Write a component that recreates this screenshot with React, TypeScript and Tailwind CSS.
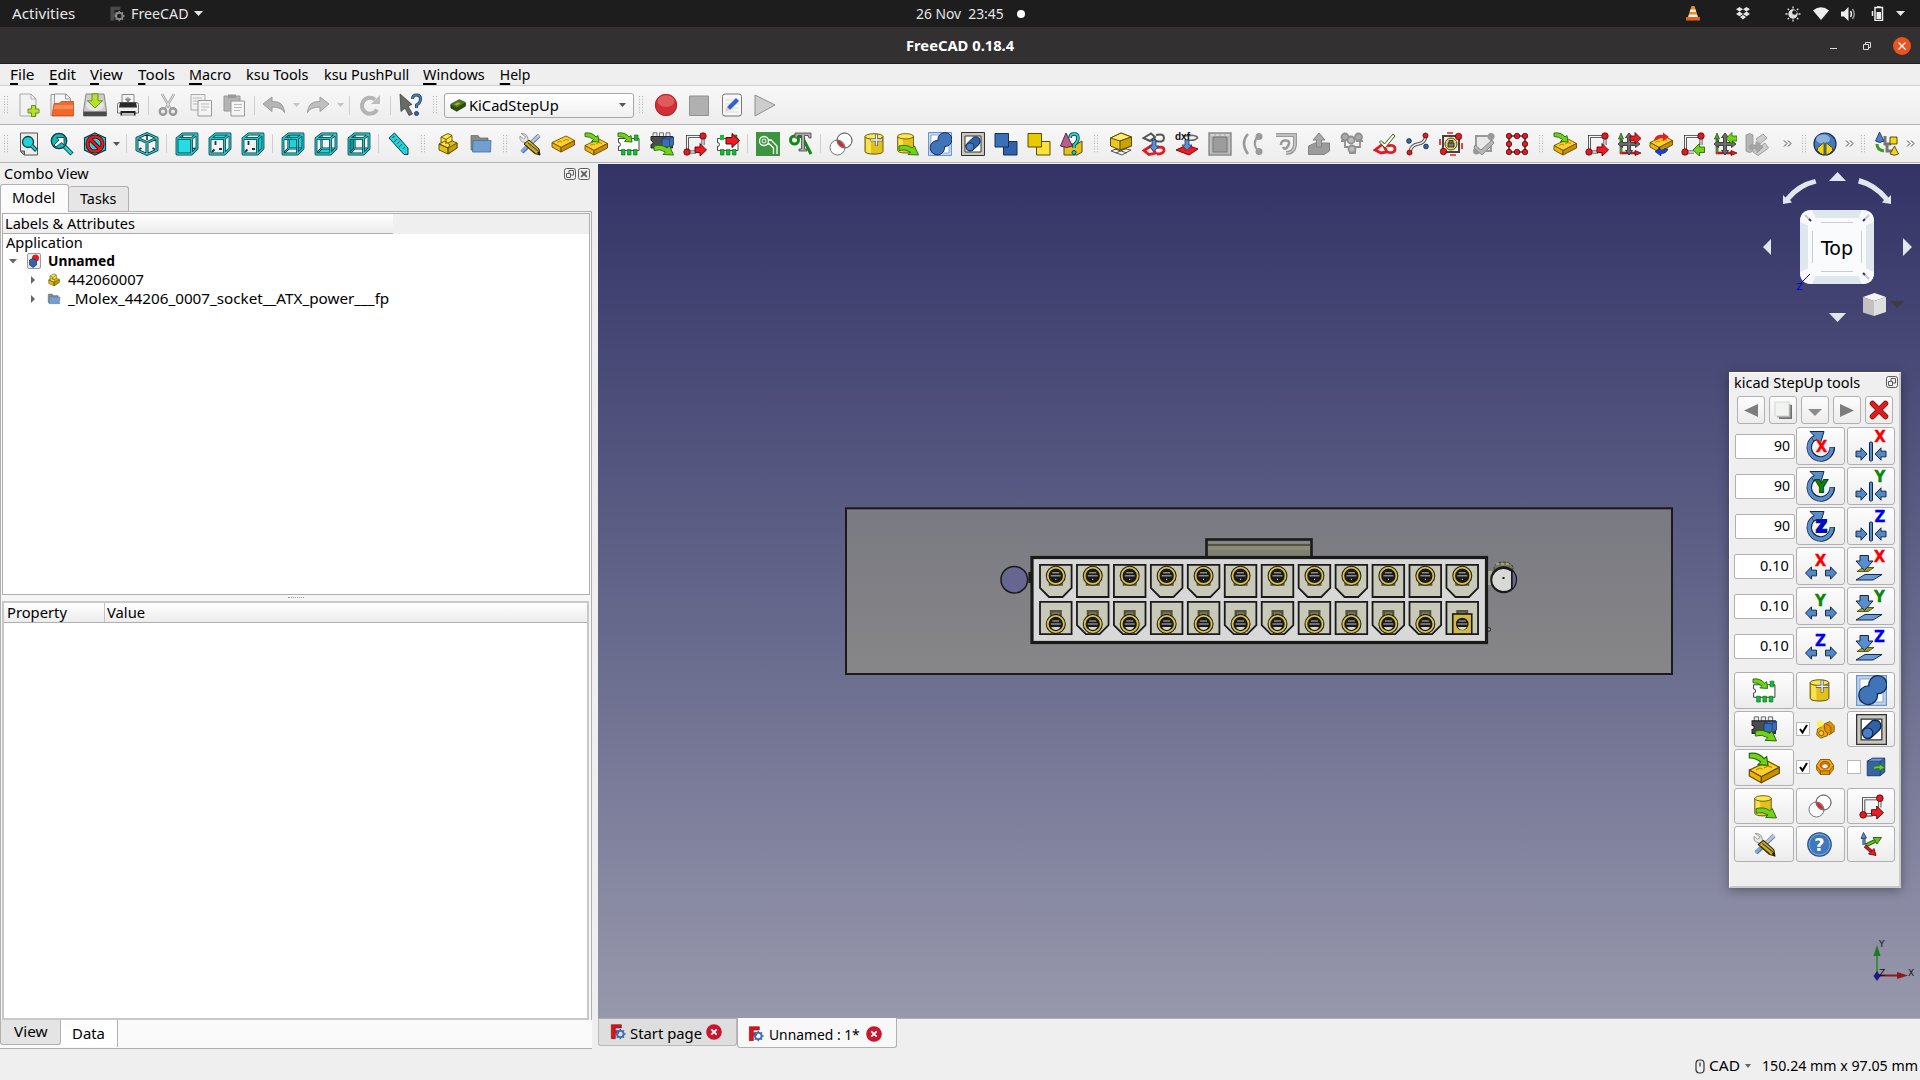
import React, { useLayoutEffect, useRef, useState } from "react";

type Kids = { children?: React.ReactNode };

/* Text condensed or widened horizontally so that it fills exactly w pixels. */
function Fit({ w, t, u = false, className = "" }: { w: number; t: string; u?: boolean; className?: string }) {
  const ref = useRef<HTMLSpanElement>(null);
  const [s, setS] = useState(1);
  useLayoutEffect(() => {
    if (ref.current && ref.current.offsetWidth) setS(w / ref.current.offsetWidth);
  }, [w, t]);
  return (
    <span className={"inline-block shrink-0 whitespace-pre " + className} style={{ width: w }}>
      <span ref={ref} className="inline-block origin-left" style={{ transform: `scaleX(${s})` }}>
        {u ? <><span className="underline decoration-2 underline-offset-[3px]">{t[0]}</span>{t.slice(1)}</> : t}
      </span>
    </span>
  );
}

const Svg = ({ children, s = 24 }: Kids & { s?: number }) => (
  <svg width={s} height={s} viewBox="0 0 24 24" className="block shrink-0" fill="none">{children}</svg>
);

const TEAL = "#0b3c40";
const CY = "#1fd3da";

type Face = "front" | "top" | "right" | "rear" | "bottom" | "left";

function Cube({ face }: { face: Face }) {
  const near = "M2 6.500H16.500V22H2ZM2 6.500L7.500 2H22V16.500L16.500 22M16.500 6.500L22 2";
  const far = "M7.500 2V16.500L2 22M7.500 16.500H22";
  const ticks = "M7.500 9V13M6.500 17.500L4 20M11 17H14";
  const faces: Record<Face, string> = {
    front: "M2 6.500H16.500V22H2Z",
    top: "M2 6.500L7.500 2H22L16.500 6.500Z",
    right: "M16.500 6.500L22 2V16.500L16.500 22Z",
    rear: "M7.500 2H22V16.500H7.500Z",
    bottom: "M2 22L7.500 16.500H22L16.500 22Z",
    left: "M2 6.500L7.500 2V16.500L2 22Z",
  };
  const solid = face === "front" || face === "top" || face === "right";
  return (
    <Svg>
      {!solid && <path d={faces[face]} fill={face === "left" ? "#12939a" : CY} />}
      {solid
        ? face !== "front" && <path d={ticks} stroke={TEAL} strokeWidth="1.800" />
        : <><path d={far} stroke={TEAL} strokeWidth="2.200" /><path d={far} stroke="#1eb9c0" strokeWidth=".9" /></>}
      {face === "front" && <path d="M7.500 2V6M17 16.500H22" stroke={TEAL} strokeWidth="1.400" />}
      {solid && <path d={faces[face]} fill={face === "right" ? "#19c4cb" : "#27dde4"} />}
      <path d={near} stroke={TEAL} strokeWidth="2.800" strokeLinejoin="round" />
      <path d={near} stroke="#22c5cc" strokeWidth="1.300" strokeLinejoin="round" />
    </Svg>
  );
}

const Board = ({ dy = 0 }: { dy?: number }) => (
  <g transform={`translate(0 ${dy})`} stroke="#6b4a00" strokeWidth=".9" strokeLinejoin="round">
    <path d="M1 10.500L15 4L23.500 8.500L10 15.500Z" fill="#fbd12a" />
    <path d="M1 10.500L10 15.500V20L1 15Z" fill="#f0b400" />
    <path d="M10 15.500L23.500 8.500V13L10 20Z" fill="#c98f00" />
    <path d="M6 10.500l3-1.500 2 1M12 9l3-1.500 3 1" fill="none" stroke="#b98500" />
  </g>
);
const GreenIn = () => <path d="M1 1Q8 0 12 5L14 3.500L15 10L7.500 9.500L9.500 7.500Q6 4.500 1 4.500Z" fill="#73d216" stroke="#1f6b07" strokeWidth=".9" />;
const GreenOut = () => <path d="M4 14Q12 12 17 16L19.500 14L23.500 23L13 22.500L15.500 20Q10 16.500 4 18.500Z" fill="#73d216" stroke="#1f6b07" strokeWidth=".9" />;
const RedDot = ({ x, y, r = 3.2 }: { x: number; y: number; r?: number }) => <circle cx={x} cy={y} r={r} fill="#e01b24" stroke="#5c0004" strokeWidth=".8" />;
const Pads = () => (
  <>
    <path d="M1.500 6.500H22V18.500H1.500V14.500A2 2 0 0 0 1.500 10.500Z" fill="#fff" stroke="#333" strokeWidth=".9" />
    <g fill="#0ac52c" stroke="#0a5a18" strokeWidth=".6"><path d="M4.500 17.500h3.500v5.500H4.500zM10.500 17.500h3.500v5.500h-3.500zM16.500 17.500h3.500v5.500h-3.500zM17.500 3h3.500v5.500h-3.500z" /></g>
  </>
);
const Cyl = () => (
  <>
    <path d="M3 4.500V19.500C3 23 21 23 21 19.500V4.500Z" fill="#e3c11c" stroke="#5b4a00" strokeWidth=".9" />
    <path d="M4 6v13.500c1 1 3 1.500 5 1.800V7.500z" fill="#f7e253" />
    <ellipse cx="12" cy="4.500" rx="9" ry="2.800" fill="#fbe84e" stroke="#5b4a00" strokeWidth=".9" />
  </>
);
const SketchBox = () => (
  <>
    <path d="M4.500 20.500V4.500H20M20 5V13M4 20H13" stroke="#333" strokeWidth="3" />
    <path d="M4.500 20.500V4.500H20M20 5V14M4.500 20H13" stroke="#f4f4f4" strokeWidth="1.400" />
    <RedDot x={20} y={4} /><RedDot x={4} y={20} />
  </>
);
const Cross = () => (
  <>
    <path d="M4 22V4M3 21H21" stroke="#3a2a2a" strokeWidth="2.600" />
    <path d="M4 22V4" stroke="#4caf2a" strokeWidth="1.500" /><path d="M3 21H21" stroke="#e01b24" strokeWidth="1.500" />
    <path d="M1.500 7L4 1L6.500 7Z" fill="#4caf2a" stroke="#1d4a10" strokeWidth=".7" /><path d="M18 18.500L24 21L18 23.500Z" fill="#e01b24" stroke="#500" strokeWidth=".7" />
    <path d="M12 1l3.500 4.500h-2v5h5v-2L23 12l-4.500 3.500v-2h-5v5h2L12 23l-3.500-4.500h2v-5h-5v2L1 12l4.500-3.500v2h5v-5h-2z" fill="#6b6b6b" stroke="#222" strokeWidth=".8" />
  </>
);

const ISO = "M12 1.500L22 6V18L12 22.500L2 18V6ZM2 6L12 10.500L22 6M12 10.500V22.500";

const I: Record<string, React.ReactNode> = {
  newdoc: <><path d="M3 1H14L19 6V23H3Z" fill="#f2f2f2" stroke="#aaa" /><path d="M14 1V6H19Z" fill="#fff" stroke="#999" strokeWidth=".8" /><path d="M14.500 12.500h4v3.500h3.500v4h-3.500V23.500h-4v-3.500H11v-4h3.500z" fill="#b7e02d" stroke="#5e8c06" strokeWidth=".9" /></>,
  open: <><path d="M1 23V1.500H4.500V23" fill="#eee" stroke="#999" /><path d="M4.500 20V1H16L20.500 5.500V20Z" fill="#f7f7f7" stroke="#999" /><path d="M15.500 1V6H20.500" stroke="#999" /><path d="M2 23L4 10.500H9L11 8.500H23.500V23Z" fill="#f0682a" stroke="#c64a1a" strokeWidth=".8" /><path d="M4.500 12H23V16H3.800z" fill="#f99a68" opacity=".7" /></>,
  save: <><path d="M3 1H21L23.500 18V23H.5V18Z" fill="#ccc" stroke="#888" /><path d="M.5 18.500H23.500V23H.5Z" fill="#4a4a4a" /><ellipse cx="12" cy="12" rx="9" ry="6" fill="#e6e6e6" /><path d="M9 .8h6v7h4.500L12 15L4.500 7.800H9z" fill="#b6df2f" stroke="#5f8d08" strokeWidth=".9" /></>,
  print: <><path d="M6 11V1.500H18V11" fill="#f4f4f4" stroke="#888" /><path d="M12 4v4m-2.500-2L12 9l2.500-3z" stroke="#888" fill="#888" /><path d="M1.500 11.500Q1.500 9.500 4 9.500H20Q22.500 9.500 22.500 11.500V20H1.500Z" fill="#f0f0f0" stroke="#777" /><path d="M4 9.500H20L21 14.500H3Z" fill="#2a2a2a" /><path d="M4.500 18H19.500V22.500H4.500Z" fill="#222" /><path d="M6 20H18V23H6Z" fill="#bbb" /></>,
  cut: <><path d="M6 1L14 15M18 1L10 15" stroke="#999" strokeWidth="2.500" /><path d="M6 1L14 15M18 1L10 15" stroke="#e8e8e8" strokeWidth="1" /><circle cx="7" cy="18.500" r="3.200" stroke="#9a9a9a" strokeWidth="2.500" /><circle cx="17" cy="18.500" r="3.200" stroke="#9a9a9a" strokeWidth="2.500" /></>,
  copy: <><path d="M2 1.500H16V17H2Z" fill="#f1f1f1" stroke="#aaa" /><path d="M4 5h9M4 8h9M4 11h9" stroke="#bbb" /><path d="M9 7.500H22.500V23H9Z" fill="#f4f4f4" stroke="#999" /><path d="M12 11h8M12 14h8M12 17h6" stroke="#bbb" /></>,
  paste: <><path d="M2 3H18V18H2Z" fill="#b3b3b3" stroke="#999" /><path d="M6 1.500H14V5H6Z" fill="#999" /><path d="M9 8H22.500V23H9Z" fill="#f4f4f4" stroke="#999" /><path d="M12 11.500h8M12 14.500h8M12 17.500h6" stroke="#bbb" /></>,
  undo: <path d="M1 11L10 4V8.500Q22 8 22.500 19.500Q20 14 10 14V18.500Z" fill="#b5b5b5" stroke="#9c9c9c" strokeLinejoin="round" />,
  redo: <path d="M23 11L14 4V8.500Q2 8 1.500 19.500Q4 14 14 14V18.500Z" fill="#c0c0c0" stroke="#9c9c9c" strokeLinejoin="round" />,
  refresh: <><path d="M19 16.500A8 8 0 1 1 17 6.500" stroke="#b4b4b4" strokeWidth="4" /><path d="M22 2V11H13Z" fill="#bdbdbd" /></>,
  whats: <><path d="M2 1L14 11.500L10 13L14.500 21L11 22.500L7 15L3 18.500Z" fill="#666b68" stroke="#3e423f" strokeWidth=".8" /><path d="M14.500 6Q14.500 2 18.500 2T22.500 6T18.500 12V15" stroke="#20406e" strokeWidth="3" /><path d="M14.500 6Q14.500 2 18.500 2T22.500 6T18.500 12V15" stroke="#4a7fc0" strokeWidth="1.400" /><circle cx="18.500" cy="20.500" r="2" fill="#3465a4" stroke="#20406e" /></>,
  record: <><circle cx="12" cy="12" r="11" fill="#d22f36" /><ellipse cx="12" cy="8" rx="8.500" ry="6" fill="#e8736f" opacity=".65" /><circle cx="12" cy="12" r="10.600" stroke="#a81c24" strokeWidth=".8" /></>,
  stop: <path d="M2.500 3H21.500V22.500H2.500Z" fill="#b0b0b0" stroke="#919191" />,
  edit: <><rect x="2.500" y="1" width="19" height="22" rx="2.500" fill="#f7f7f7" stroke="#777" /><path d="M5 7h14M5 11h14M5 15h14M5 19h14" stroke="#ddd" /><path d="M16 5L19 8L10 17L7 14Z" fill="#2f62d9" /><path d="M7 14L10 17L5.500 18.500Z" fill="#eec79a" /></>,
  play: <path d="M2 2L22 12L2 23Z" fill="#cdcdcd" stroke="#909090" />,
  fitall: <><path d="M3.500 1H20.500V23H7L3.500 19.500Z" fill="#ececea" stroke="#555" /><path d="M3.500 19h4v4" fill="#999" stroke="#555" /><circle cx="11" cy="10" r="5.500" fill={CY} stroke={TEAL} strokeWidth="1.300" /><path d="M14.500 13.500L19.500 18.500" stroke={TEAL} strokeWidth="4" /><path d="M14.500 13.500L19 18" stroke={CY} strokeWidth="2" /></>,
  fitsel: <><path d="M14 14L22 22" stroke={TEAL} strokeWidth="4.500" /><path d="M14 14L21.500 21.500" stroke={CY} strokeWidth="2.600" /><circle cx="9" cy="9" r="7.700" fill="#19b5bd" stroke={TEAL} strokeWidth="1.300" /><path d="M4 13l5-5-2.500-2.500H14V13L11.500 10.500L6 15z" fill="#fff" stroke={TEAL} strokeWidth=".9" /></>,
  nodraw: <><path d="M12 1L22.500 6V18L12 23L1.500 18V6Z" fill={CY} stroke={TEAL} strokeWidth="1.200" /><circle cx="12" cy="12" r="7.500" stroke="#4d0003" strokeWidth="4" /><path d="M6.500 6.500L17.500 17.500" stroke="#4d0003" strokeWidth="4" /><circle cx="12" cy="12" r="7.500" stroke="#e01b24" strokeWidth="2.400" /><path d="M6.500 6.500L17.500 17.500" stroke="#e01b24" strokeWidth="2.400" /></>,
  iso: <><path d="M12 4V8M6.500 16L4 17.500M17.500 16L20 17.500" stroke={TEAL} strokeWidth="1.600" /><path d={ISO} stroke={TEAL} strokeWidth="3" strokeLinejoin="round" /><path d={ISO} stroke="#35ccd2" strokeWidth="1.300" strokeLinejoin="round" /></>,
  ruler: <><path d="M2 6L7.500 1L21 16V22.500H17Z" fill={CY} stroke={TEAL} /><path d="M7.500 4l-2 2M10 7l-3 3M12.500 9.500l-2 2M15 12l-3 3M18 15l-2 2" stroke={TEAL} /></>,
  part: <g stroke="#5b4a00" strokeWidth=".9" strokeLinejoin="round"><path d="M3 12L12 7L21 11V16L12 22L3 18Z" fill="#e3bf12" /><path d="M5 5L12 1.500L16 3.500V9L10 12L5 10Z" fill="#fce94f" /><path d="M3 12L9 9L14 13L12 16Z" fill="#fbe23e" /><path d="M12 16L21 11V16L12 22Z" fill="#c4a000" /><path d="M5 5l5 2.500L16 3.500M10 7.500V12M3 12l9 4v6" fill="none" /></g>,
  folder: <><path d="M2 3.500H9L11 6H19V18H2Z" fill="#888a85" stroke="#666" strokeWidth=".7" /><path d="M4 8.500H22L21.500 20H3.500Z" fill="#729fcf" stroke="#3f6ea5" strokeWidth=".8" /></>,
  tools: <><path d="M21 3.500L4 20" stroke="#3465a4" strokeWidth="4" /><path d="M21.500 3L13 11" stroke="#b9c5d6" strokeWidth="3" /><path d="M3.500 20L9 14.500" stroke="#7ea6d8" strokeWidth="3" /><path d="M3 1.500Q10 1 10 8L20 18L17 21L7 10.500Q1 10 2 4L5.500 7L8 5Z" fill="#e6e6e6" stroke="#8a8a8a" strokeWidth=".8" /><path d="M6 12L11 8L21 17L22 23L16.500 21.500Z" fill="#c9a92a" stroke="#2b2400" /><path d="M8 13.500L17 21M10 11L20 19" stroke="#413600" /><path d="M19 21l3 2-1-4z" fill="#111" /></>,
  board: <Board />,
  boardin: <><Board dy={3} /><GreenIn /></>,
  padsin: <><Pads /><GreenIn /></>,
  chipout: <><g fill="#eee" stroke="#555" strokeWidth=".8"><path d="M3 .8h4v4H3zM9.500.8h4v4h-4zM16 .8h4v4h-4z" /></g><path d="M1 4.500H22.500V16H1V12.500A2 2 0 0 0 1 8.500Z" fill="#4a4d50" stroke="#222" /><path d="M12 7L16 5H23.500V13L20 15H12Z" fill="#3a6fb8" stroke="#173a6c" strokeWidth=".8" /><path d="M12 7H19.500V15M19.500 7L23.500 5" stroke="#173a6c" strokeWidth=".7" /><GreenOut /></>,
  skred: <><SketchBox /><path d="M12 15h5v-3.500L23.500 18L17 24v-3.500H12z" fill="#ed1c24" stroke="#5c0004" strokeWidth=".9" /></>,
  skgreen: <><SketchBox /><path d="M23.500 15H18.500v-3.500L12 18L18.500 24v-3.500H23.500z" fill="#73d216" stroke="#1f6b07" strokeWidth=".9" /></>,
  padsout: <><Pads /><path d="M4 3h4v5H4z" fill="#0ac52c" /><path d="M10 5.500h6V1.500L23.500 8.500L16 15.500V12H10z" fill="#ed1c24" stroke="#5c0004" /></>,
  track: <><path d="M0 0H24V24H0Z" fill="#3c9440" /><circle cx="8" cy="9" r="4.500" stroke="#fff" strokeWidth="1.300" /><circle cx="8" cy="9" r="2" stroke="#fff" /><path d="M12 8H15L21 14V22M11 12H13.500L17.500 16V22" stroke="#fff" strokeWidth="1.300" /></>,
  tracktext: <><circle cx="5.500" cy="8" r="4" stroke="#0d8a14" strokeWidth="3" /><path d="M9 4.500H13L22 22" stroke="#0d8a14" strokeWidth="3" /><path d="M6 1H22V6H20L19 3.500H15.500V17H18V19H10V17H12.500V3.500H9L8 6H6Z" fill="#aaa" stroke="#444" strokeWidth=".8" /></>,
  inter: <><circle cx="15.500" cy="8.500" r="7.500" fill="#fff" stroke="#777" /><circle cx="8.500" cy="15.500" r="7.500" fill="#fff" stroke="#777" /><path d="M8 8.200Q14 8.500 15.800 15.800Q9 15 8 8.200Z" fill="#ed1c24" stroke="#777" /><circle cx="15.500" cy="8.500" r="7.500" stroke="#666" strokeWidth=".8" /></>,
  cylplus: <><Cyl /><path d="M14.500 2v12M8.500 8h12" stroke="#666" strokeWidth="3" /><path d="M14.500 2.500v11M9 8h11" stroke="#f4f4f4" strokeWidth="1.300" /></>,
  cylout: <><g transform="scale(.88 .95)"><Cyl /></g><GreenOut /></>,
  union: <><path d="M.5.500H23.500V23.500H.5Z" fill="#c3d6ee" stroke="#6c96c9" /><path d="M3 3H21V21H3Z" fill="#fff" stroke="#89add8" /><path d="M10 8.500A7 7 0 1 1 16.500 14.500A7.200 7.200 0 1 1 10 8.500Z" fill="#3f75b8" stroke="#122f58" /></>,
  boxed: <><path d="M.5.500H23.500V23.500H.5Z" fill="#c9c9c2" stroke="#333" /><path d="M4 4H20V20H4Z" fill="#fff" stroke="#333" /><path d="M5.500 12L12.500 5.200Q17 4 18.700 7Q20 10 18 12.500L11.500 18.500Q7 20 5.500 16.500T5.500 12Z" fill="#2f62a8" stroke="#0d274c" /><circle cx="9" cy="14.800" r="4" fill="#4b80c4" stroke="#0d274c" strokeWidth=".8" /></>,
  bluesq: <g fill="#2f62a8" stroke="#122f58"><path d="M9.500 9.500H23V23H9.500Z" /><path d="M1 1.500H14.500V15H1Z" fill="#3a70b5" /></g>,
  yelsq: <g fill="#fbe23e" stroke="#5b4a00"><path d="M9.500 9.500H23V23H9.500Z" /><path d="M1 1.500H14.500V15H1Z" fill="#e9c900" /></g>,
  shapeq: <><path d="M4 12H17L22 9V20L17 23H4Z" fill="#e3c11c" stroke="#5b4a00" /><path d="M6 1L12.500 14Q6 17 .5 14Z" fill="#b45f8d" stroke="#5d2645" /><path d="M10 6Q10 2 14 2T18 6T14 13V16" stroke={TEAL} strokeWidth="3.400" /><path d="M10 6Q10 2 14 2T18 6T14 13V16" stroke={CY} strokeWidth="1.800" /><circle cx="14" cy="20.500" r="2" fill={CY} stroke={TEAL} /></>,
  yelbox: <><path d="M2 19L10 15.500L22 18L13 23ZM6 17l12 4M18 16L7 21" stroke="#555" /><path d="M1.500 6L12 1L22.500 5V14L11 18L1.500 14Z" fill="#e9c91f" stroke="#5b4a00" /><path d="M1.500 6L12 1L22.500 5L11 9Z" fill="#fbec6b" stroke="#5b4a00" /><path d="M11 9L22.500 5V14L11 18Z" fill="#c9a400" stroke="#5b4a00" /></>,
  skdown: <><path d="M1.500 6L9 1.500L13 5L8 9ZM14 3Q22 1 22 6T14 9L12 6" stroke="#555" strokeWidth="2" /><path d="M2 18.500L9 14L13.500 21L7 22.500ZM14 15.500Q22 14 22 18T15 22" stroke="#e01b24" strokeWidth="2.800" /><path d="M10 8h4v6h3L12 19.500L7 14h3z" fill="#5b8fd0" stroke="#1d3d6c" strokeWidth=".8" /></>,
  dxf: <><path d="M8 4Q22 2 22.500 6Q20 9 12 8" stroke="#666" strokeWidth="1.700" /><path d="M1 18L12 13L23 17L14 23Z" fill="#ed1c24" stroke="#8a0006" /><path d="M10 8h4v5h3L12 18.500L7 13h3z" fill="#5b8fd0" stroke="#1d3d6c" strokeWidth=".8" /><text x="0" y="8" fontSize="10" fontWeight="700" fontFamily="Liberation Sans" fill="#111">dxf</text></>,
  gframe: <><path d="M1 1H23V23H1Z" fill="#bbb" stroke="#8d8d8d" strokeWidth="1.500" /><path d="M5 5H19V20H5Z" fill="#9c9c9c" stroke="#777" /><path d="M3 3h18" stroke="#eee" strokeDasharray="3 2" /></>,
  garc: <><path d="M7 2Q-1 11 7 22" stroke="#999" strokeWidth="2.600" /><path d="M17 4Q10 12 18 20" stroke="#999" strokeWidth="2" /><circle cx="18" cy="4.500" r="3.500" fill="#9a9a9a" /><circle cx="18" cy="19.500" r="3.500" fill="#9a9a9a" /></>,
  gspiral: <><path d="M2 3H21V13Q20 21 12 21" stroke="#999" strokeWidth="4" /><path d="M2 3H21V13Q20 21 12 21" stroke="#ccc" strokeWidth="1.500" /><path d="M7 13Q7 8 12 8.500T14 14T9 15" stroke="#999" strokeWidth="2.600" /></>,
  gup: <><path d="M1.500 14L8 11H22.500V19L17 22.500H1.500Z" fill="#9b9b9b" stroke="#838383" /><path d="M9.500 15V8H6L12 1L18 8H14.500V15Z" fill="#a9a9a9" stroke="#838383" /></>,
  gnodes: <g stroke="#8f8f8f" strokeWidth="1.800"><path d="M5 10V15H10V21H15V15H20V10" fill="none" /><circle cx="5" cy="5" r="3.500" fill="#aaa" /><circle cx="18.500" cy="5" r="3.500" fill="#aaa" /><circle cx="11" cy="8" r="3.500" fill="#bbb" /><circle cx="12" cy="17" r="3.500" fill="#bbb" /><path d="M1 9h5M16 9h7" /></g>,
  skok: <><path d="M2 18L10 12L14 20L8 21ZM14 14Q22 12 22 17T14 20" stroke="#e01b24" strokeWidth="2.800" /><path d="M8 8.500L11.500 12L20 2L22 4L12 16L6.500 10Z" fill="#fff" stroke="#2d6414" /></>,
  bspline: <><path d="M4 20Q5 13 12 12T20 4" stroke="#555" strokeWidth="3.400" /><path d="M4 20Q5 13 12 12T20 4" stroke="#eee" strokeWidth="1.600" /><RedDot x={19.500} y={3.500} r={2.500} /><RedDot x={3.500} y={20.500} r={2.500} /><circle cx="3" cy="9" r="2.400" fill="#3465a4" stroke="#123" strokeWidth=".7" /><circle cx="20" cy="14.500" r="2.400" fill="#3465a4" stroke="#123" strokeWidth=".7" /></>,
  lock: <><path d="M4 4H20V20H4Z" fill="#eee" stroke="#444" strokeWidth="2" /><circle cx="12" cy="12" r="6" fill="#e8d56a" stroke="#5b4a00" /><path d="M9 11h6v4H9zM10 11V8.500h4V11" fill="#777" stroke="#222" strokeWidth=".8" /><RedDot x={19.500} y={4.500} /><RedDot x={4.500} y={19.500} /><path d="M8 1h6M1 7v6M23 11v6M11 23h6" stroke="#ed1c24" strokeWidth="1.700" /></>,
  gcheck: <><path d="M4 4H19V19H4Z" stroke="#999" strokeWidth="2" fill="#e8e8e8" /><circle cx="19" cy="4.500" r="3.500" fill="#999" /><circle cx="4.500" cy="19" r="3.500" fill="#999" /><path d="M3 13L9 18L20 8L22 11L10 23L2 16Z" fill="#b5b5b5" stroke="#8b8b8b" /></>,
  reddots: <><path d="M4 4H20V20H4Z" stroke="#333" strokeWidth="1.600" fill="#f2f2f2" />{[4, 12, 20].map((x) => [4, 12, 20].map((y) => (x === 12 && y === 12 ? null : <RedDot key={x * 30 + y} x={x} y={y} r={2.700} />)))}</>,
  boardturn: <><Board dy={0} /><path d="M5 8Q7 2 14 3V.5L20 5L14 9V6.500Q9 5 8 8Z" fill="#ed1c24" /><path d="M19 17Q17 22 12 21.500V24L6 19.500L11 15.500V18Q15 19 16 16.500Z" fill="#1a3fe0" stroke="#0a1a70" strokeWidth=".6" /></>,
  crossred: <><Cross /><path d="M13 4h5V.5L24 6.500L18 12V9H13z" fill="#ed1c24" stroke="#5c0004" strokeWidth=".8" /></>,
  crossgreen: <><Cross /><path d="M24 4h-5V.5L13 6.500L19 12V9H24z" fill="#73d216" stroke="#1f6b07" strokeWidth=".8" /></>,
  gcyl: <g stroke="#999" strokeWidth=".9"><path d="M1 3V19Q4.500 22 8 19V3Q4.500 0 1 3Z" fill="#b5b5b5" /><path d="M11 7L18 2L22 6L15 12ZM8 20L20 11L23.500 16L13 23.500Z" fill="#cdcdcd" /><path d="M5 13h6V9.500L18 15L12 21V17H5z" fill="#a5a5a5" /></g>,
  globe: <><circle cx="12" cy="12" r="11" fill="#4479bd" stroke="#173158" strokeWidth="1.200" /><ellipse cx="10" cy="7" rx="7" ry="4.500" fill="#9dbfe5" opacity=".8" /><path d="M11 10.500L4.500 16V18.500Q7 22 11 23ZM13 10.500L19.500 16V18.500Q17 22 13 23Z" fill="#f3d61c" stroke="#4b4000" strokeWidth=".8" /></>,
  tree: <><path d="M10 4V12H16M12 12V19H18" stroke="#777" strokeWidth="3" /><path d="M4.500 0L9 9Q5 12 .5 9Z" fill="#4a7fc0" stroke="#173158" strokeWidth=".8" /><path d="M15 5h7v7h-7z" fill="#f3d61c" stroke="#4b4000" strokeWidth=".9" /><path d="M19.500 14L23.500 22Q19.500 24.500 15 22Z" fill="#f3d61c" stroke="#4b4000" strokeWidth=".9" /><path d="M2 12Q2 18 9 19" stroke="#3d9a1c" strokeWidth="3" /></>,
  fasten: <><g stroke="#7c4a00" strokeWidth="1"><path d="M3 12L10 8L15 12V20L7 23L2 19Z" fill="#f5a70a" /><path d="M11 6L18 3L23 8V15L17 19L12 14Z" fill="#e39400" /><path d="M13 5.500l6 4v8" /><circle cx="7.500" cy="17" r="3" fill="#ffc94d" /></g><circle cx="6" cy="6" r="4" fill="#fff23e" opacity=".9" /></>,
  nut: <g stroke="#7c4a00" strokeWidth="1"><path d="M6 2H18L23.500 10V15L18 22H6L.5 15V10Z" fill="#e39400" /><path d="M6 2H18L23.500 10L18 17H6L.5 10ZM6 17V22M18 17V22" fill="#f9ab15" /><ellipse cx="12" cy="9.500" rx="6.500" ry="5" fill="#c87800" /><ellipse cx="12" cy="11" rx="4.300" ry="3.200" fill="#efefef" stroke="#a86200" /></g>,
  bluebox: <><path d="M1.500 5L8 1.500H22.500V18L17 22.500H1.500Z" fill="#3465a4" stroke="#122f58" /><path d="M1.500 5L8 1.500H22.500L17 5Z" fill="#6d9bd6" stroke="#122f58" strokeWidth=".7" /><path d="M17 5V22" stroke="#122f58" strokeWidth=".7" /><path d="M9 12Q13 10 16 11V8.500L22.500 12.500L16 16.500V14Q12 13.500 9 15Z" fill="#73d216" stroke="#1f6b07" strokeWidth=".7" /></>,
  help: <><circle cx="12" cy="12" r="11.300" fill="#3f78bb" stroke="#1f4a80" /><circle cx="12" cy="12" r="10" stroke="#8db4e0" strokeWidth=".8" /><text x="12" y="18" textAnchor="middle" fontSize="17" fontWeight="700" fontFamily="DejaVu Sans" fill="#fff">?</text></>,
  axes: <><path d="M5 13V4" stroke="#173158" strokeWidth="3" /><path d="M5 13V4" stroke="#5b8fd0" strokeWidth="1.600" /><path d="M2 6.500L4.500.500L7.500 6Z" fill="#5b8fd0" stroke="#173158" strokeWidth=".8" /><path d="M6.500 13.500L16 9" stroke="#1f4b07" strokeWidth="3.600" /><path d="M6.500 13.500L16 9" stroke="#5fc11c" strokeWidth="2" /><path d="M14 5.500L22.500 5.500L18 12Z" fill="#5fc11c" stroke="#1f4b07" strokeWidth=".8" /><path d="M6 14L13 20" stroke="#5c0004" strokeWidth="3.600" /><path d="M6 14L13 20" stroke="#ed1c24" strokeWidth="2" /><path d="M15 16.500L17 23.500L9.500 22Z" fill="#ed1c24" stroke="#5c0004" strokeWidth=".8" /></>,
};

const FcLogo = ({ gray = false, s = 16 }: { gray?: boolean; s?: number }) => (
  <Svg s={s}>
    <path d="M2 1H17V6H8V10H13V14H8V22H2Z" fill={gray ? "#4b4b4b" : "#d8141c"} stroke={gray ? "#333" : "#6d0508"} strokeWidth=".8" />
    <circle cx="15.500" cy="15" r="5" stroke={gray ? "#8a8a8a" : "#3f6fb4"} strokeWidth="3" />
    <path d="M15.500 7.500v3M15.500 19.500v3.500M8 15h3M20 15h3.500M10 9.700l2 2M19 18.500l2 2M10 20.500l2-2M19 11.500l2-2" stroke={gray ? "#8a8a8a" : "#3f6fb4"} strokeWidth="2" />
  </Svg>
);

function Slot({ n, tight = false }: { n: string; tight?: boolean }) {
  const faces = ["front", "top", "right", "rear", "bottom", "left"];
  return (
    <div className={"flex shrink-0 items-center justify-center " + (tight ? "w-[32px]" : "w-[33px]")}>
      {faces.includes(n) ? <Cube face={n as Face} /> : <Svg>{I[n]}</Svg>}
    </div>
  );
}
const Sep = () => <div className="flex h-full w-[7px] shrink-0 items-center justify-center"><div className="h-[19px] w-px bg-[#cfcfcf]" /></div>;
const Handle = ({ className = "w-[16px]" }: { className?: string }) => (
  <div className={"flex h-full shrink-0 items-center justify-center " + className}>
    <svg width="5" height="18" className="block">
      {Array.from({ length: 7 }, (_, i) => <path key={i} d={`M0 ${i * 2.700}h1v1h-1zM3 ${i * 2.700}h1v1h-1z`} fill="#b0b0b0" />)}
    </svg>
  </div>
);
const Down = ({ c = "#555" }: { c?: string }) => (
  <div className="flex w-[11px] shrink-0 items-center justify-center"><svg width="7" height="4"><path d="M0 0H7L3.500 4Z" fill={c} /></svg></div>
);
const Chev = ({ className }: { className: string }) => (
  <div className={"flex shrink-0 items-center justify-center " + className}>
    <svg width="9" height="7" fill="none" stroke="#444" strokeWidth="1"><path d="M1 .5L4 3.500L1 6.500M5 .5L8 3.500L5 6.500" /></svg>
  </div>
);
const FloatBtn = ({ x = false }: { x?: boolean }) => (
  <svg width="12" height="12" viewBox="0 0 12 12" fill="none" stroke="#5c5c5c" className="block">
    <rect x=".5" y=".5" width="11" height="11" rx="2" />
    {x ? <path d="M3.200 3.200l5.600 5.600M8.800 3.200l-5.600 5.600" strokeWidth="1.800" /> : <path d="M2.500 5.500h4v4h-4zM5 5V2.500h4.500v4.500H7" />}
  </svg>
);

const menus: [string, number, boolean][] = [
  ["File", 24, true], ["Edit", 27, true], ["View", 33, true], ["Tools", 37, true], ["Macro", 42, true],
  ["ksu Tools", 63, false], ["ksu PushPull", 85, false], ["Windows", 62, true], ["Help", 31, true],
];

function TopBar() {
  return (
    <div className="flex h-[27px] items-center bg-[#1d1d1d] text-[14px] text-[#e6e6e6]">
      <div className="flex w-[916px] items-center pl-[12px]">
        <Fit w={63} t="Activities" />
        <div className="w-[34px]" />
        <FcLogo gray />
        <div className="w-[6px]" />
        <Fit w={58} t="FreeCAD" />
        <svg width="9" height="5" className="ml-[5px]"><path d="M0 0H9L4.500 5Z" fill="#e6e6e6" /></svg>
      </div>
      <Fit w={88} t="26 Nov  23:45" />
      <div className="ml-[13px] size-[8px] rounded-full bg-white" />
      <div className="ml-auto flex items-center pr-[15px]">
        <svg width="14" height="15" viewBox="0 0 14 15"><path d="M5.500 0h3L12 11H2Z" fill="#f08a1d" /><path d="M4.500 3.500h5L10 6H3.800zM3 8.500h8l.7 2.500H2.300z" fill="#eee" /><path d="M0 11H14V14.500H0Z" fill="#e2641c" /></svg>
        <svg width="14" height="13" viewBox="0 0 14 13" fill="#e6e6e6" className="ml-[36px]"><path d="M3.500 0L7 2.300L3.500 4.600L0 2.300ZM10.500 0L14 2.300L10.500 4.600L7 2.300ZM3.500 4.600L7 6.900L3.500 9.200L0 6.900ZM10.500 4.600L14 6.900L10.500 9.200L7 6.900ZM7 8L10 10L7 12.500L4 10Z" /></svg>
        <svg width="16" height="16" viewBox="0 0 16 16" fill="none" stroke="#e6e6e6" strokeWidth="1.300" className="ml-[35px]"><circle cx="8" cy="8" r="4" fill="#ddd" /><path d="M8 .5v2M8 13.500v2M.5 8h2M13.500 8h2M2.700 2.700l1.300 1.300M12 12l1.300 1.300M2.700 13.300L4 12M12 4l1.300-1.300" /><circle cx="9.500" cy="6.500" r="2.300" fill="#1d1d1d" stroke="none" /></svg>
        <svg width="16" height="13" viewBox="0 0 16 13" fill="#eee" className="ml-[12px]"><path d="M0 3.500Q8-3 16 3.500L8 13Z" /></svg>
        <svg width="16" height="14" viewBox="0 0 16 14" fill="none" stroke="#999" strokeWidth="1.400" className="ml-[12px]"><path d="M0 4.500H3L7.500 0V14L3 9.500H0Z" fill="#eee" stroke="none" /><path d="M9.500 4Q11.500 7 9.500 10" stroke="#eee" /><path d="M11.500 2Q15 7 11.500 12" /></svg>
        <svg width="13" height="15" viewBox="0 0 13 15" fill="none" stroke="#eee" className="ml-[14px]"><path d="M4 1.500H11.500V14.500H4Z" strokeWidth="1.500" /><path d="M6 0h3.500" strokeWidth="1.500" /><path d="M5.500 6H10V13H5.500Z" fill="#eee" stroke="none" /><path d="M1.500 5v5" strokeWidth="1.500" /></svg>
        <svg width="9" height="5" className="ml-[12px]"><path d="M0 0H9L4.500 5Z" fill="#e6e6e6" /></svg>
      </div>
    </div>
  );
}

function TitleBar() {
  return (
    <div className="flex h-[37px] items-center border-b border-[#1f1c1c] bg-[#333031] pt-px text-[13.500px] font-bold text-white">
      <div className="w-[906px]" />
      <Fit w={108} t="FreeCAD 0.18.4" />
      <div className="ml-auto flex items-center pr-[9px]">
        <div className="mt-[6px] h-[1.500px] w-[7px] bg-[#ddd]" />
        <svg width="8" height="8" className="ml-[26px]" fill="none" stroke="#ddd"><path d="M.5 2.500H5.500V7.500H.5ZM2.500 2V.5H7.500V5.500H6" /></svg>
        <div className="ml-[22px] flex size-[18px] items-center justify-center rounded-full bg-[#e95420]">
          <svg width="8" height="8" stroke="#fff" strokeWidth="1.300"><path d="M.5.500L7.500 7.500M7.500.500L.5 7.500" /></svg>
        </div>
      </div>
    </div>
  );
}

function Toolbars() {
  const bar = "flex items-center border-b border-[#b4b4b4] bg-gradient-to-b from-[#f8f8f8] to-[#ededed]";
  return (
    <>
      <div className={bar + " h-[39px]"}>
        <Handle className="w-[12.500px]" />
        {["newdoc", "open", "save", "print"].map((n) => <Slot key={n} n={n} />)}
        <Sep />
        {["cut", "copy", "paste"].map((n) => <Slot key={n} n={n} />)}
        <Sep />
        <Slot n="undo" /><Down c="#c4c4c4" /><Slot n="redo" /><Down c="#c4c4c4" />
        <Sep /><div className="w-px" /><Slot n="refresh" /><Sep /><Slot n="whats" />
        <Handle className="w-[17px]" />
        <div className="flex h-[25px] w-[190px] items-center rounded-[3px] border border-[#a8a8a8] bg-gradient-to-b from-white to-[#f0f0f0] pl-[5px] pr-[5px] text-[14.500px]">
          <svg width="16" height="13" viewBox="0 0 24 20"><path d="M1 8L14 1L23.500 5.500V11L10 19L1 14Z" fill="#264d12" stroke="#1a2e0a" /><path d="M1 8L14 1L23.500 5.500L10 13Z" fill="#4b7a1e" /><path d="M6 8l6-3 4 2-6 3z" fill="#c99b1f" /></svg>
          <div className="w-[3px]" />
          <Fit w={90} t="KiCadStepUp" />
          <div className="ml-auto"><Down /></div>
        </div>
        <Handle />
        {["record", "stop", "edit", "play"].map((n) => <Slot key={n} n={n} />)}
      </div>
      <div className={bar + " h-[38px]"}>
        <Handle className="w-[12px]" />
        <Slot n="fitall" /><Slot n="fitsel" /><Slot n="nodraw" /><Down /><div className="w-px" />
        <Sep /><Slot n="iso" /><Sep />
        <Slot n="front" /><Slot n="top" /><Slot n="right" /><Sep />
        <Slot n="rear" /><Slot n="bottom" /><Slot n="left" /><Sep />
        <Slot n="ruler" />
        <Handle />
        <Slot n="part" /><Slot n="folder" />
        <Handle />
        {["tools", "board", "boardin", "padsin", "chipout", "skred", "padsout"].map((n) => <Slot key={n} n={n} />)}
        <Sep /><Slot n="track" /><Slot n="tracktext" /><Sep />
        {["inter", "cylplus", "cylout", "union", "boxed", "bluesq", "yelsq", "shapeq"].map((n) => <Slot key={n} n={n} />)}
        <Handle />
        {["yelbox", "skdown", "dxf", "gframe", "garc", "gspiral", "gup", "gnodes", "skok", "bspline", "lock", "gcheck", "reddots"].map((n) => <Slot key={n} n={n} />)}
        <Handle />
        {["boardin", "skred", "crossred", "boardturn", "skgreen", "crossgreen", "gcyl"].map((n) => <Slot key={n} n={n} tight />)}
        <Chev className="w-[28px]" /><Handle className="w-[7px]" />
        <Slot n="globe" /><Chev className="w-[16px]" />
        <Handle className="w-[13px]" /><Slot n="tree" /><Chev className="w-[15px]" />
      </div>
    </>
  );
}

const Tri = ({ open = false }: { open?: boolean }) => (
  <svg width="8" height="8" className="block shrink-0"><path d={open ? "M0 2H8L4 6.500Z" : "M2 0L6 4L2 8Z"} fill="#666" /></svg>
);

function Combo() {
  return (
    <div className="flex w-[598px] shrink-0 flex-col bg-[#efefef]">
      <div className="flex h-[20px] items-center pl-[4px] pr-[8px]">
        <Fit w={85} t="Combo View" />
        <div className="ml-auto flex gap-[2px]"><FloatBtn /><FloatBtn x /></div>
      </div>
      <div className="flex h-[27px] items-end">
        <div className="relative z-10 -mb-px flex h-[28px] w-[69px] items-center justify-center rounded-t-[3px] border border-b-0 border-[#b0b0b0] bg-[#fbfbfb] pb-[2px] pr-[2px]"><Fit w={43} t="Model" /></div>
        <div className="flex h-[25px] w-[60px] items-center justify-center rounded-t-[3px] border border-b-0 border-l-0 border-[#b0b0b0] bg-[#e6e6e6] pr-px"><Fit w={36} t="Tasks" /></div>
      </div>
      <div className="flex h-[838px] w-[592px] flex-col border border-[#b0b0b0] bg-[#f6f6f6] pl-px pr-px pt-px">
        <div className="flex h-[382px] flex-col border border-[#b0b0b0] bg-white">
          <div className="flex h-[20px] bg-[#efefef]">
            <div className="flex w-[390px] items-center border-b border-[#b0b0b0] bg-gradient-to-b from-white to-[#ececec] pl-[2px]"><Fit w={130} t="Labels & Attributes" /></div>
          </div>
          <div className="flex h-[17px] items-center pl-[3px]"><Fit w={77} t="Application" /></div>
          <div className="flex h-[19px] items-center pl-[6px] font-bold">
            <Tri open />
            <svg width="14" height="16" viewBox="0 0 14 16" className="ml-[10px]"><rect x=".5" y=".5" width="13" height="15" rx="1.500" fill="#eee" stroke="#999" /><circle cx="8.500" cy="5" r="3.500" fill="#e01b24" /><path d="M2.500 7L6 5.500L9.500 7.500V12L6 14.500L2.500 12Z" fill="#3465a4" stroke="#173158" strokeWidth=".7" /></svg>
            <div className="w-[7px]" />
            <Fit w={67} t="Unnamed" />
          </div>
          <div className="flex h-[19px] items-center pl-[26px]"><Tri /><div className="ml-[10px] mr-[7px]"><Svg s={14}>{I.part}</Svg></div><Fit w={76} t="442060007" /></div>
          <div className="flex h-[19px] items-center pl-[26px]"><Tri /><div className="ml-[10px] mr-[7px]"><Svg s={14}>{I.folder}</Svg></div><Fit w={321} t="_Molex_44206_0007_socket__ATX_power___fp" /></div>
        </div>
        <div className="flex h-[6px] items-start justify-center pt-[2px]"><div className="h-px w-[16px] border-t border-dotted border-[#999]" /></div>
        <div className="mr-px flex h-[419px] flex-col border-2 border-[#c8c8c8] bg-white">
          <div className="flex h-[20px] items-center border-b border-[#b0b0b0] bg-gradient-to-b from-white to-[#ececec]">
            <div className="flex h-full w-[101px] items-center border-r border-[#c4c4c4] pl-[3px]"><Fit w={60} t="Property" /></div>
            <div className="pl-[2px]"><Fit w={38} t="Value" /></div>
          </div>
        </div>
        <div className="-mx-[2px] -mb-px flex flex-1 items-start border-b border-[#b0b0b0] bg-[#fafafa]">
          <div className="flex h-[25px] w-[61px] items-center justify-center rounded-b-[3px] border border-t-0 border-[#b0b0b0] bg-[#e4e4e4]"><Fit w={34} t="View" /></div>
          <div className="flex h-[27px] w-[57px] items-center justify-center border-r border-[#b0b0b0] bg-white pr-px"><Fit w={33} t="Data" /></div>
        </div>
      </div>
    </div>
  );
}

function Pin({ x, y, low, last }: { x: number; y: number; low: boolean; last: boolean }) {
  return (
    <g>
      {low
        ? <><rect x={x - 6} y={y - 14} width="12" height="8" fill="#55553f" /><path d={`M${x - 3} ${y - 8}V${y - 11}H${x + 3}V${y - 8}`} fill="none" stroke="#8f8f78" /></>
        : <rect x={x - 7} y={y + 4} width="14" height="6" fill="#55553f" />}
      {last
        ? <rect x={x - 9.500} y={y - 10} width="19" height="20" fill="#d4b840" stroke="#1a1a1a" strokeWidth="1.600" />
        : <><circle cx={x} cy={y} r="10" fill="#1a1a1a" /><circle cx={x} cy={y} r="8.100" fill="none" stroke="#dcc244" strokeWidth="1.800" /></>}
      <circle cx={x} cy={y} r="6.300" fill="#1a1a1a" />
      {low && <path d={`M${x - 4.500} ${y + 3}H${x + 4.500}Q${x + 3} ${y + 6} ${x} ${y + 6}T${x - 4.500} ${y + 3}`} fill="#d2d2ce" />}
      <path d={`M${x - 3.500} ${y - 3}h7M${x - 5} ${y}h10`} stroke="#8b8b8b" strokeWidth="1.600" />
      {!low && <rect x={x - .5} y={y + 3} width="1" height="1" fill="#fff" />}
    </g>
  );
}

/* Board outline, connector housing and pins as one drawing, 830 x 170 from (844, 507). */
function Model() {
  const cut = [[0, 3, 4, 7, 8, 11], [1, 2, 5, 6, 9, 10]];
  return (
    <svg width="830" height="170" viewBox="844 507 830 170" className="block">
      <defs><linearGradient id="pcb" x1="0" y1="0" x2="0" y2="1"><stop offset="0" stopColor="#797a82" /><stop offset="1" stopColor="#878688" /></linearGradient></defs>
      <rect x="846" y="508.300" width="826" height="165.700" fill="url(#pcb)" stroke="#1a1a1a" strokeWidth="2" />
      <rect x="1206.500" y="539.500" width="105" height="18" fill="#7f7f74" stroke="#1a1a1a" strokeWidth="2.600" />
      <path d="M1208 542.500H1310" stroke="#88888f" strokeWidth="2" /><path d="M1208 545H1310" stroke="#55553f" strokeWidth="2" /><path d="M1208 548H1310" stroke="#8b8b78" strokeWidth="4" />
      <circle cx="1014.300" cy="579.700" r="13.300" fill="#666690" stroke="#1a1a1a" strokeWidth="1.500" />
      <rect x="1028.500" y="572" width="3" height="11" fill="#1a1a1a" />
      <rect x="1487" y="571" width="5" height="14" fill="#aeae9e" />
      <ellipse cx="1503.500" cy="568" rx="9.500" ry="6" fill="#77775f" stroke="#3b3b2d" strokeDasharray="3 1.500" />
      <path d="M1496 564H1511" stroke="#c9c9b5" strokeDasharray="3 2" />
      <circle cx="1503.700" cy="579.700" r="13.500" fill="#1a1a1a" />
      <path d="M1512.700 571.500A12.200 12.200 0 0 1 1512.700 588Z" fill="#666690" />
      <path d="M1511 571.500V588.500A11.500 11 0 1 1 1511 571.500Z" fill="#d8d8d6" />
      <rect x="1502.500" y="577" width="2" height="2" fill="#1a1a1a" />
      <circle cx="1488.800" cy="629.500" r="1.800" fill="#999" stroke="#1a1a1a" />
      <rect x="1032" y="557.500" width="454.500" height="85" fill="#d8d8d8" stroke="#1a1a1a" strokeWidth="3.200" />
      {[0, 1].map((r) => Array.from({ length: 12 }, (_, i) => {
        const x = 1040 + i * 36.950;
        const y = r ? 601.800 : 564.800;
        const c = cut[r].includes(i) ? 9 : 0;
        const h = r ? 32.400 : 32.200;
        return (
          <g key={r * 12 + i}>
            <path d={`M${x} ${y}h31.600v${h - c}l${-c} ${c}h${-31.600 + 2 * c}l${-c} ${-c}Z`} fill="#c9c9b9" stroke="#1a1a1a" strokeWidth="1.800" />
            <Pin x={x + 15.800} y={r ? 624 : 575.800} low={r === 1} last={r === 1 && i === 11} />
          </g>
        );
      }))}
    </svg>
  );
}

function NavCube() {
  return (
    <svg width="160" height="160" viewBox="1760 165 160 160" className="block">
      <g fill="#e0e7ee">
        <path d="M1829 181L1837.500 172L1846 181ZM1829 313H1846L1837.500 322ZM1771 239V255L1763 247ZM1903 238V256L1912 247Z" />
        <path d="M1783 204V195L1785.500 197.500Q1797 183 1815 179L1816.500 183.500Q1801 187 1790 200L1792 202.500ZM1891 204V195L1888.500 197.500Q1877 183 1859.500 178L1858 183.500Q1873 187 1884 200L1882 202.500Z" />
      </g>
      <path d="M1800 222Q1800 210 1812 210H1862Q1874 210 1874 222V272Q1874 284 1862 284H1812Q1800 284 1800 272Z" fill="#dfe7ee" />
      <path d="M1800 222Q1800 210 1812 210L1816 219H1809V226ZM1874 222Q1874 210 1862 210L1858 219H1865V226ZM1800 272Q1800 284 1812 284L1816 275H1809V268ZM1874 272Q1874 284 1862 284L1858 275H1865V268Z" fill="#f7f9fc" />
      <rect x="1808" y="218" width="58" height="58" rx="3" fill="#f9fbfd" />
      <path d="M1805 215L1809 219M1869 215L1865 219M1869 279L1865 275" stroke="#c7c9d8" strokeWidth="2" />
      <path d="M1809 219l2 2M1865 219l-2 2M1865 275l-2-2" stroke="#333366" strokeWidth="2" />
      <path d="M1821 222.500H1853M1821 271.500H1853M1812.500 231V263M1861.500 231V263" stroke="#c9cbd8" />
      <path d="M1810 274L1801 283" stroke="#0000d8" />
      <text x="1796.500" y="289.500" fontSize="9" fontFamily="DejaVu Sans" fill="#0000d8">Z</text>
      <text x="1821" y="254.500" fontSize="19" textLength="32" fontFamily="DejaVu Sans" fill="#000">Top</text>
      <path d="M1863 297L1874.500 293L1886 297L1874 301Z" fill="#f4f4f4" /><path d="M1863 297L1874 301V316L1863 312.500Z" fill="#c2c2c2" /><path d="M1874 301L1886 297V312L1874 316Z" fill="#dfdfdf" />
      <path d="M1890 301H1904L1897 308Z" fill="#3c3c42" />
    </svg>
  );
}

const COL: Record<string, string> = { X: "#f80000", Y: "#0a850a", Z: "#0000f0" };
const L = ({ a, x, y, s = 13 }: { a: string; x: number; y: number; s?: number }) => (
  <text x={x} y={y} fontSize={s} fontWeight="700" textAnchor="middle" fontFamily="DejaVu Sans" fill={COL[a]} stroke={COL[a]} strokeWidth=".3">{a}</text>
);
const AR = "M0 -3H5V-6.500L11 0L5 6.500V3H0Z";
const BlueAr = ({ x, y, flip = false }: { x: number; y: number; flip?: boolean }) => (
  <path d={AR} transform={`translate(${x} ${y}) scale(${flip ? -1 : 1} .95)`} fill="#5286c4" stroke="#10294a" strokeWidth="1" />
);

function AxisIcon({ k, a }: { k: "rot" | "mir" | "mov" | "put"; a: string }) {
  return (
    <svg width="34" height="34" viewBox="0 0 34 34" fill="none">
      {k === "rot" && <>
        <path d="M11 8.500A11.500 11.500 0 1 0 28.300 18" stroke="#10294a" strokeWidth="5.500" />
        <path d="M11 8.500A11.500 11.500 0 1 0 28 18.500" stroke="#5a8ecb" strokeWidth="3.600" />
        <path d="M6 2.500L20 2.500L16.500 14L13 10.500L10 12L8.500 9.500L10.500 7Z" fill="#5a8ecb" stroke="#10294a" strokeWidth="1" />
        <path d="M9 10l3-2" stroke="#5a8ecb" strokeWidth="3" />
        {a !== "X" && <text x="17.500" y="22.500" fontSize="15" fontWeight="700" textAnchor="middle" fontFamily="DejaVu Sans" stroke="#031" strokeWidth="2">{a}</text>}
        <L a={a} x={17.500} y={22.500} s={15} />
      </>}
      {k === "mir" && <>
        <rect x="15.500" y="13" width="3" height="19" rx="1" fill="#5a8ecb" stroke="#10294a" />
        <BlueAr x={2} y={25} /><BlueAr x={32} y={25} flip />
        <L a={a} x={26} y={13} s={15} />
      </>}
      {k === "mov" && <><BlueAr x={12.500} y={24} flip /><BlueAr x={21.500} y={24} /><L a={a} x={16.500} y={16.500} s={15} /></>}
      {k === "put" && <>
        <path d="M3 22.500L9 18.500H20L14 22.500Z" fill="#a3a010" stroke="#3c3b00" strokeWidth=".8" />
        <path d="M2 31L11 25.500H28L19 31Z" fill="#6d9bd6" stroke="#10294a" />
        <path d="M6 6.500H14.500V12H19L10.500 21.500L2 12H6Z" fill="#5a8ecb" stroke="#10294a" />
        <L a={a} x={25.500} y={13} s={15} />
      </>}
    </svg>
  );
}

const btn = "flex items-center justify-center rounded-[3px] border border-[#b0b0b0] bg-gradient-to-b from-[#fdfdfd] to-[#ececec]";
const Btn = ({ n, c, s = 24 }: { n: string; c: string; s?: number }) => <div className={`${btn} ${c}`}><Svg s={s}>{I[n]}</Svg></div>;
const Check = ({ on = false }: { on?: boolean }) => (
  <div className="flex size-[14px] items-center justify-center border border-[#b8b8b8] bg-white">
    {on && <svg width="9" height="10" fill="none" stroke="#000" strokeWidth="2"><path d="M1 5L3.500 8.500L8 1" /></svg>}
  </div>
);

function ToolsPanel() {
  return (
    <div className="flex h-[516px] w-[172px] flex-col border-2 border-l border-t border-[#c9c9c9] border-l-white border-t-white bg-[#efefef] shadow-[0_2px_10px_rgba(0,0,0,0.35)]">
      <div className="flex h-[22px] items-start pl-[4px] pr-px text-[14.500px]"><Fit w={126} t="kicad StepUp tools" /><div className="ml-auto pt-[3px]"><FloatBtn /></div></div>
      <div className="flex gap-[4px] pl-[7px] pt-px">
        <div className={btn + " size-[28px]"}><svg width="14" height="13"><path d="M14 0V13L0 6.500Z" fill="#7d7d7d" /></svg></div>
        <div className={btn + " size-[28px]"}><svg width="19" height="19"><path d="M5 18V15H15V4H18V18Z" fill="#6e6e6e" /><path d="M3 16.500V15H15V3H16.500V16.500Z" fill="#a8a8a8" /><rect x="1" y="1" width="14" height="14" fill="#f1f3f0" stroke="#ccc" strokeWidth=".7" /></svg></div>
        <div className={btn + " size-[28px] pt-[4px]"}><svg width="14" height="7"><path d="M0 0H14L7 7Z" fill="#8c8c8c" /></svg></div>
        <div className={btn + " size-[28px]"}><svg width="14" height="13"><path d="M0 0V13L14 6.500Z" fill="#7d7d7d" /></svg></div>
        <div className={btn + " size-[28px]"}><svg width="20" height="20" viewBox="0 0 20 20"><path d="M3.500 3.500L16.500 16.500M16.500 3.500L3.500 16.500" stroke="#8b0f0f" strokeWidth="5.500" strokeLinecap="round" /><path d="M3.500 3.500L16.500 16.500M16.500 3.500L3.500 16.500" stroke="#d81e1e" strokeWidth="4" strokeLinecap="round" /></svg></div>
      </div>
      <div className="flex flex-col gap-[2px] pl-[4px] pt-[3px]">
        {[["90", 16, "X"], ["90", 16, "Y"], ["90", 16, "Z"], ["0.10", 29, "X"], ["0.10", 29, "Y"], ["0.10", 29, "Z"]].map(([v, w, a], i) => (
          <div key={i} className="flex h-[38px] items-center">
            <div className={"flex h-[25px] items-center justify-end rounded-[2px] border border-[#b0b0b0] bg-white pr-[4px] text-[14px] " + (i < 3 ? "ml-px w-[60px]" : "mr-px w-[60px]")}><Fit w={w as number} t={v as string} className="-mt-px" /></div>
            <div className={btn + " ml-px h-[38px] w-[49px]"}><AxisIcon k={i < 3 ? "rot" : "mov"} a={a as string} /></div>
            <div className={btn + " ml-[2px] h-[38px] w-[48px]"}><AxisIcon k={i < 3 ? "mir" : "put"} a={a as string} /></div>
          </div>
        ))}
      </div>
      <div className="flex flex-col gap-[2px] pl-[4px] pt-[7px]">
        <div className="flex gap-[2px]"><Btn n="padsin" c="w-[60px] h-[37px]" s={25} /><Btn n="cylplus" c="w-[49px] h-[37px] pr-[2px]" s={25} /><Btn n="union" c="w-[48px] h-[37px]" s={31} /></div>
        <div className="flex gap-[2px]">
          <Btn n="chipout" c="w-[60px] h-[36px]" s={26} />
          <div className="flex w-[49px] items-center gap-[5px]"><Check on /><Svg s={20}>{I.fasten}</Svg></div>
          <Btn n="boxed" c="w-[48px] h-[36px]" s={31} />
        </div>
        <div className="flex gap-[2px]">
          <Btn n="boardin" c="w-[60px] h-[37px]" s={32} />
          <div className="flex w-[49px] items-center gap-[6px] pb-[2px]"><Check on /><Svg s={18}>{I.nut}</Svg></div>
          <div className="flex w-[48px] items-center gap-[5px] pb-[2px]"><Check /><Svg s={20}>{I.bluebox}</Svg></div>
        </div>
        <div className="flex gap-[2px]"><Btn n="cylout" c="w-[60px] h-[36px]" s={25} /><Btn n="inter" c="w-[49px] h-[36px] pr-[2px]" /><Btn n="skred" c="w-[48px] h-[36px]" s={25} /></div>
        <div className="flex gap-[2px]"><Btn n="tools" c="w-[60px] h-[36px]" s={25} /><Btn n="help" c="w-[49px] h-[36px] pr-[2px]" s={25} /><Btn n="axes" c="w-[48px] h-[36px]" /></div>
      </div>
    </div>
  );
}

function Viewport() {
  return (
    <div className="relative h-[854px] bg-gradient-to-b from-[#333366] to-[#9898ac]">
      <div className="absolute left-[246px] top-[343px]"><Model /></div>
      <div className="absolute left-[1162px] top-px"><NavCube /></div>
      <div className="absolute left-[1131px] top-[208px]"><ToolsPanel /></div>
      <svg width="50" height="50" viewBox="1870 935 50 50" className="absolute left-[1272px] top-[771px]">
        <path d="M1877 976V952" stroke="#1f8a1f" strokeWidth="1.500" /><path d="M1873.500 956L1877 945L1880.500 956Z" fill="#1f7a1f" />
        <path d="M1877 975.500H1900" stroke="#8b1a1a" strokeWidth="2" /><path d="M1897 972L1908 975.500L1897 979Z" fill="#8b1a1a" />
        <path d="M1877 971L1880.500 976L1877 981L1873.500 976Z" fill="#1a1a8b" />
        <g fontSize="9" fontFamily="DejaVu Sans" fill="#111"><text x="1879" y="947">Y</text><text x="1879" y="976">Z</text><text x="1908" y="976">X</text></g>
      </svg>
    </div>
  );
}

const CloseDot = () => (
  <svg width="16" height="16" className="block"><circle cx="8" cy="8" r="7.800" fill="#c9152f" /><path d="M5.300 5.300l5.400 5.400M10.700 5.300l-5.400 5.400" stroke="#fff" strokeWidth="1.800" /></svg>
);

export default function App() {
  return (
    <div className="flex h-[1080px] w-[1920px] flex-col overflow-hidden bg-[#efefef] font-['Noto_Sans',sans-serif] text-[14px] leading-[18px] text-black">
      <TopBar />
      <TitleBar />
      <div className="flex h-[22px] items-center gap-[14.600px] border-b border-[#d0d0d0] pl-[10px]">
        {menus.map(([t, w, u]) => <Fit key={t} t={t} w={w} u={u} />)}
      </div>
      <Toolbars />
      <div className="flex h-[887px] pt-px">
        <Combo />
        <div className="flex flex-1 flex-col">
          <Viewport />
          <div className="flex h-[31px] items-start border-t border-[#b0b0b0]">
            <div className="flex h-[27px] w-[139px] items-center rounded-b-[3px] border border-t-0 border-[#b8b8b8] bg-[#dedede] pl-[11px]">
              <FcLogo /><div className="w-[4px]" /><Fit w={72} t="Start page" className="mt-[3px]" /><div className="w-[4px]" /><CloseDot />
            </div>
            <div className="-mt-px flex h-[30px] w-[160px] items-center rounded-b-[3px] border border-t-0 border-[#b0b0b0] bg-[#f8f8f8] pl-[10px] pt-[2px]">
              <FcLogo /><div className="w-[5px]" /><Fit w={91} t="Unnamed : 1*" className="mt-[2px]" /><div className="w-[6px]" /><CloseDot />
            </div>
          </div>
        </div>
      </div>
      <div className="flex h-[30px] items-center justify-end pr-[2px] pt-[2px]">
        <svg width="10" height="15" fill="none" stroke="#333" strokeWidth="1.200"><rect x="1" y="1" width="8" height="13" rx="3.500" /><path d="M5 3.500v4" /></svg>
        <div className="w-[4px]" /><Fit w={31} t="CAD" />
        <svg width="6" height="4" className="ml-[5px] mr-[11px]"><path d="M0 0H6L3 4Z" fill="#666" /></svg>
        <Fit w={156} t="150.24 mm x 97.05 mm" />
      </div>
    </div>
  );
}
